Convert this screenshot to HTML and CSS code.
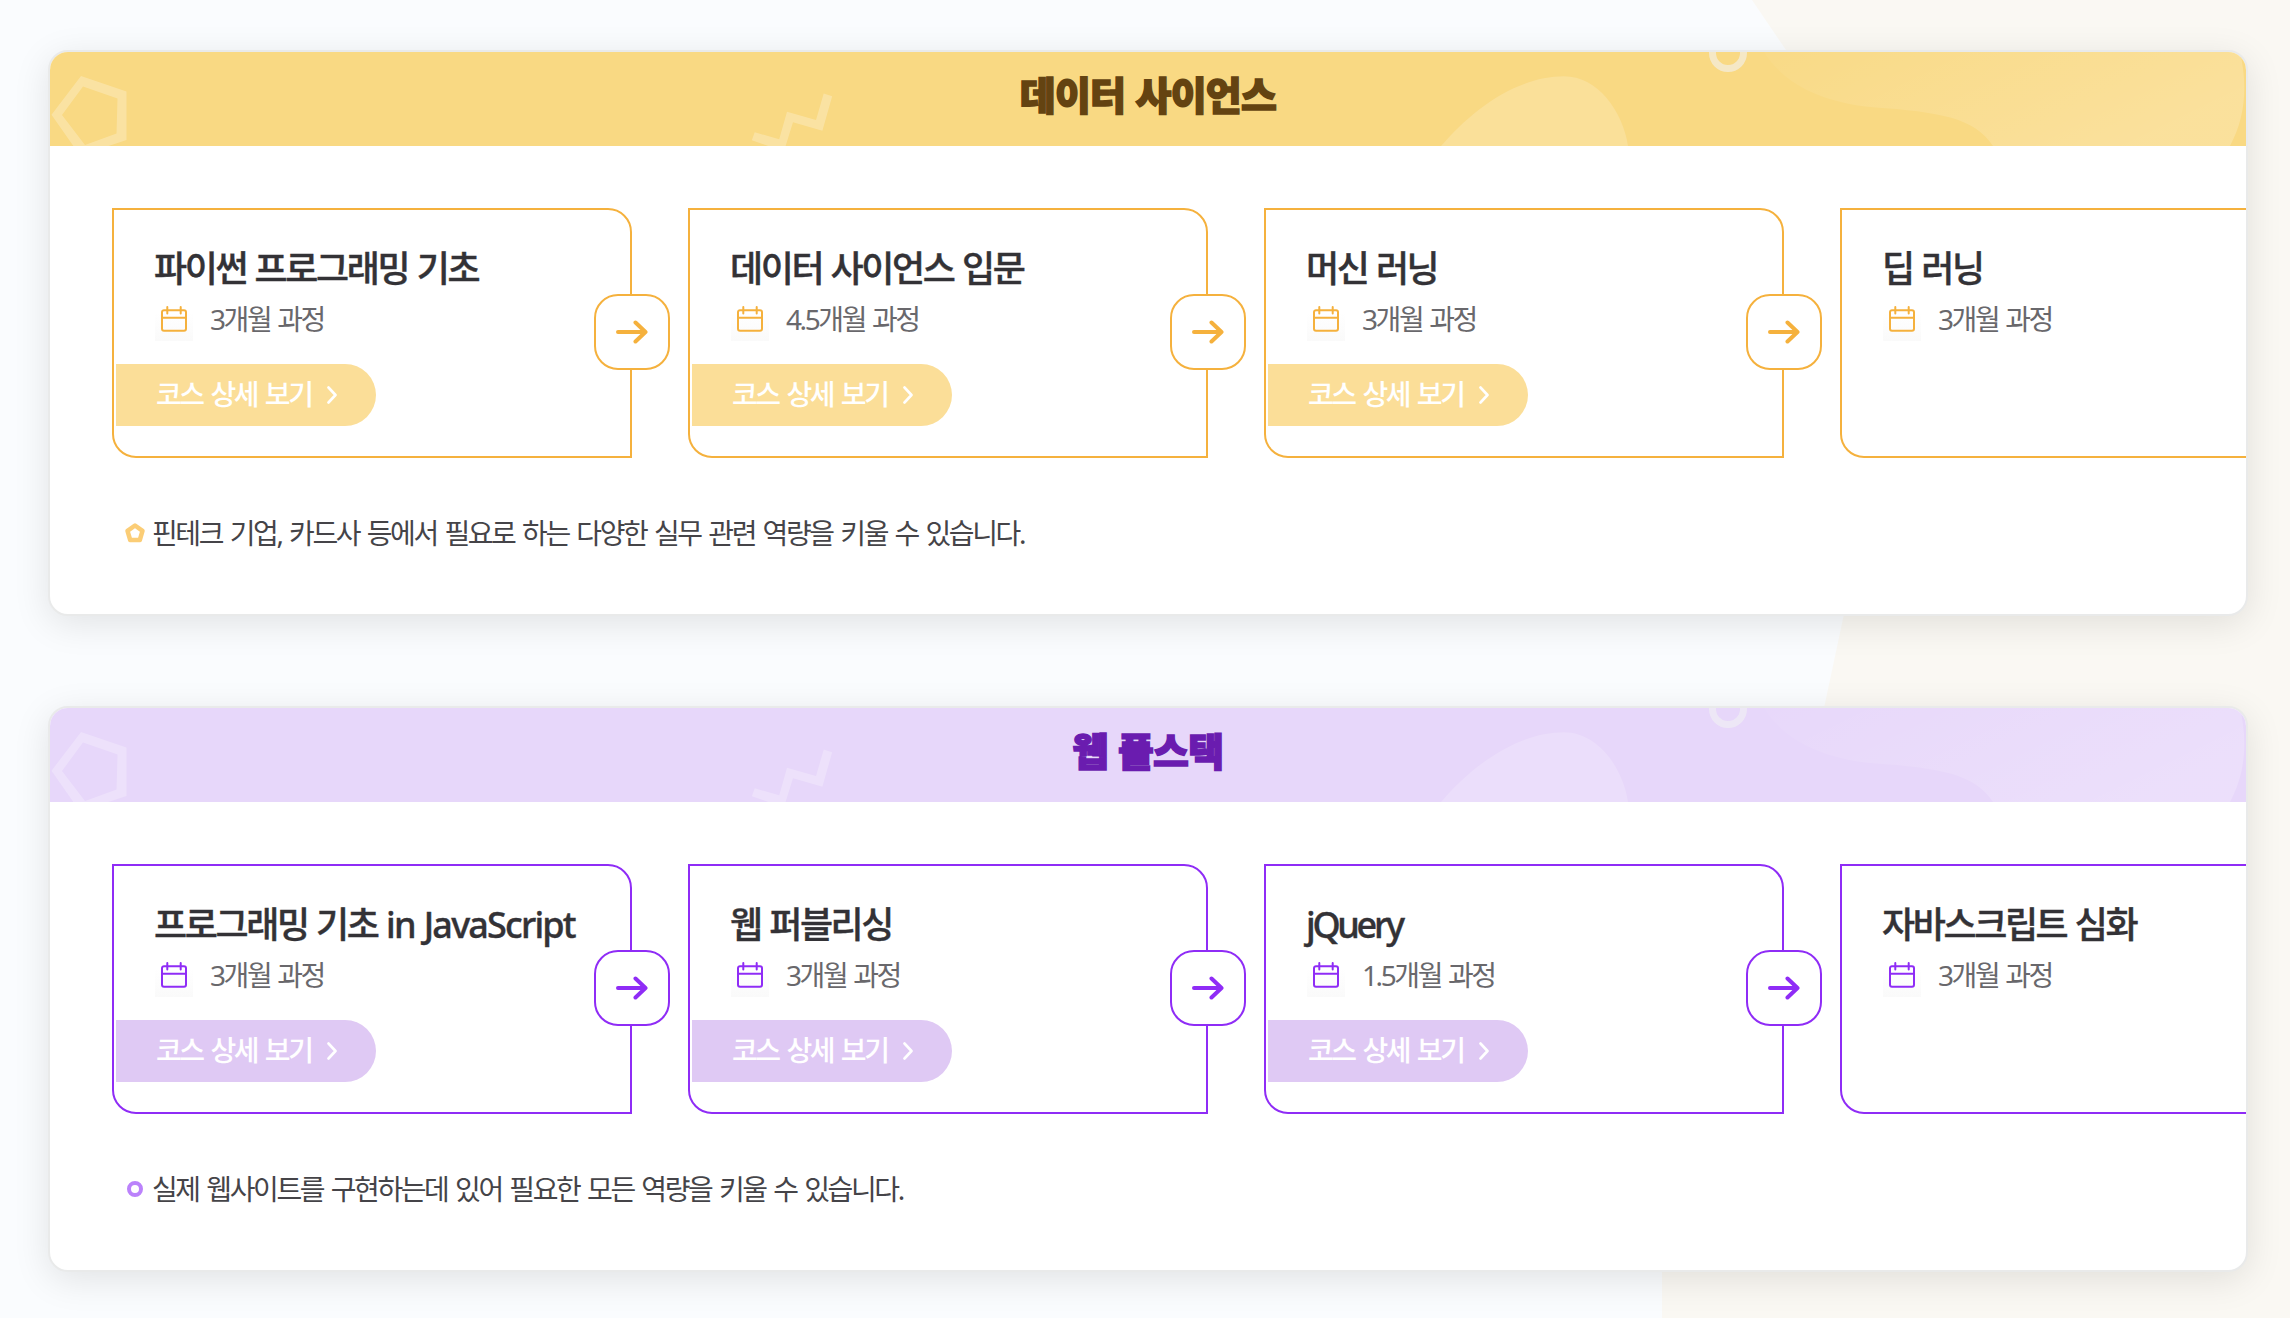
FILE: index.html
```html
<!DOCTYPE html>
<html lang="ko">
<head>
    <meta charset="UTF-8">
    <meta name="viewport" content="width=device-width, initial-scale=1.0">
    <title>학습 로드맵</title>
    <link rel="stylesheet" href="styles.css">
</head>
<body>
    <svg class="sprite" width="0" height="0">
        <defs>
            <linearGradient id="wave" x1="0" y1="0" x2="1" y2="0.4">
                <stop offset="0" stop-color="#fff" stop-opacity="0.03" />
                <stop offset="1" stop-color="#fff" stop-opacity="0.2" />
            </linearGradient>
        </defs>
        <symbol id="header-shapes" viewBox="0 0 2196 94">
            <path d="M31 24L76.500 39.500V88L30 103.500L1.500 62.700ZM33 34.500L12 63L35 93L66.500 81.500L67.500 46.500Z" fill="#fff" fill-opacity="0.25" fill-rule="evenodd" />
            <path d="M773.700 41.500L782.200 44.200L772.400 78.700L743 70.300L735 96H724L701.800 88.300L704.700 80.200L729.200 87.300L737 59.700L766 68Z" fill="#fff" fill-opacity="0.25" />
            <path d="M1391 94C1420 60 1465 24.300 1514 24.300C1548 24.300 1573 60 1578 94Z" fill="#fff" fill-opacity="0.18" />
            <circle cx="1678" cy="1" r="15.500" fill="none" stroke="#f2f2f3" stroke-opacity="0.6" stroke-width="7" />
            <path d="M1714 0C1735 33 1772 50 1823 55.300C1890 60 1925 66 1943 94H2180C2195 66 2198 35 2190 0Z" fill="url(#wave)" />
        </symbol>
        <symbol id="calendar" viewBox="0 0 26 26">
            <path d="M3 4.200H23A2 2 0 0 1 25 6.200V22.800A2 2 0 0 1 23 24.800H3A2 2 0 0 1 1 22.800V6.200A2 2 0 0 1 3 4.200ZM1 11.700H25M6.300 1V7.500M19.700 1V7.500" fill="none" stroke="currentColor" stroke-width="2" stroke-linecap="round" />
        </symbol>
        <symbol id="arrow" viewBox="0 0 32 24">
            <path d="M2 12H29M19.500 2.500L29.500 12L19.500 21.500" fill="none" stroke="currentColor" stroke-width="4" stroke-linecap="round" stroke-linejoin="round" />
        </symbol>
        <symbol id="chevron" viewBox="0 0 10 18">
            <path d="M1.500 1.500L8.500 9L1.500 16.500" fill="none" stroke="currentColor" stroke-width="2.600" stroke-linecap="round" stroke-linejoin="round" />
        </symbol>
    </svg>

    <svg class="backdrop" viewBox="0 0 2290 1318">
        <path d="M1752 0L1786 50C1870 230 1888 390 1844 614L1824 708C1790 850 1662 980 1662 1240V1318H2290V0Z" fill="#faf8f3" />
    </svg>

    <main class="roadmaps">
        <section class="roadmap data">
            <header class="roadmap-header">
                <svg class="shapes"><use href="#header-shapes" /></svg>
                <h2>데이터 사이언스</h2>
            </header>
            <div class="courses">
                <article class="course">
                    <h3>파이썬 프로그래밍 기초</h3>
                    <p class="period"><svg><use href="#calendar" /></svg>3개월 과정</p>
                    <a class="detail">코스 상세 보기<svg><use href="#chevron" /></svg></a>
                    <span class="next"><svg><use href="#arrow" /></svg></span>
                </article>
                <article class="course">
                    <h3>데이터 사이언스 입문</h3>
                    <p class="period"><svg><use href="#calendar" /></svg>4.5개월 과정</p>
                    <a class="detail">코스 상세 보기<svg><use href="#chevron" /></svg></a>
                    <span class="next"><svg><use href="#arrow" /></svg></span>
                </article>
                <article class="course">
                    <h3>머신 러닝</h3>
                    <p class="period"><svg><use href="#calendar" /></svg>3개월 과정</p>
                    <a class="detail">코스 상세 보기<svg><use href="#chevron" /></svg></a>
                    <span class="next"><svg><use href="#arrow" /></svg></span>
                </article>
                <article class="course">
                    <h3>딥 러닝</h3>
                    <p class="period"><svg><use href="#calendar" /></svg>3개월 과정</p>
                </article>
            </div>
            <p class="note">
                <svg viewBox="0 0 22 22"><path d="M11 3.500L18.500 8.800L15.800 18H6.200L3.500 8.800Z" fill="none" stroke="currentColor" stroke-width="4.500" stroke-linejoin="round" /></svg>
                <span>핀테크 기업, 카드사 등에서 필요로 하는 다양한 실무 관련 역량을 키울 수 있습니다.</span>
            </p>
        </section>

        <section class="roadmap web">
            <header class="roadmap-header">
                <svg class="shapes"><use href="#header-shapes" /></svg>
                <h2>웹 풀스택</h2>
            </header>
            <div class="courses">
                <article class="course">
                    <h3>프로그래밍 기초 <span class="wide">in JavaScript</span></h3>
                    <p class="period"><svg><use href="#calendar" /></svg>3개월 과정</p>
                    <a class="detail">코스 상세 보기<svg><use href="#chevron" /></svg></a>
                    <span class="next"><svg><use href="#arrow" /></svg></span>
                </article>
                <article class="course">
                    <h3>웹 퍼블리싱</h3>
                    <p class="period"><svg><use href="#calendar" /></svg>3개월 과정</p>
                    <a class="detail">코스 상세 보기<svg><use href="#chevron" /></svg></a>
                    <span class="next"><svg><use href="#arrow" /></svg></span>
                </article>
                <article class="course">
                    <h3><span class="tight">jQuery</span></h3>
                    <p class="period"><svg><use href="#calendar" /></svg>1.5개월 과정</p>
                    <a class="detail">코스 상세 보기<svg><use href="#chevron" /></svg></a>
                    <span class="next"><svg><use href="#arrow" /></svg></span>
                </article>
                <article class="course">
                    <h3>자바스크립트 심화</h3>
                    <p class="period"><svg><use href="#calendar" /></svg>3개월 과정</p>
                </article>
            </div>
            <p class="note">
                <svg viewBox="0 0 22 22"><circle cx="11" cy="11" r="6" fill="none" stroke="currentColor" stroke-width="4" /></svg>
                <span>실제 웹사이트를 구현하는데 있어 필요한 모든 역량을 키울 수 있습니다.</span>
            </p>
        </section>
    </main>
</body>
</html>
```

FILE: styles.css
```css
* {
    box-sizing: border-box;
    margin: 0;
    padding: 0;
}
body {
    position: relative;
    height: 1318px;
    overflow: hidden;
    background: #fafcfe;
    color: #333236;
    font-family: "Noto Sans", "Noto Sans CJK KR", sans-serif;
}
.sprite {
    position: absolute;
}
.backdrop {
    position: absolute;
    top: 0;
    left: 0;
    width: 2290px;
    height: 1318px;
}
.roadmaps {
    position: relative;
    display: flex;
    flex-direction: column;
    gap: 90px;
    width: 2248px;
    padding: 50px 0 0 48px;
}
.roadmap {
    height: 566px;
    overflow: hidden;
    background: #fff;
    border: 2px solid #e9eaea;
    border-radius: 20px;
    box-shadow: 0 8px 36px rgba(0, 0, 0, 0.1);
}
.data {
    --accent: #f5b13d;
    --header: #f9d983;
    --title: #644311;
    --button: #fbde98;
    --bullet: #fbcd76;
}
.web {
    --accent: #8f2cf6;
    --header: #e7d7fa;
    --title: #6a1caf;
    --button: #dfc9f4;
    --bullet: #bb82fb;
}
.roadmap-header {
    position: relative;
    display: flex;
    justify-content: center;
    align-items: center;
    height: 94px;
    background: var(--header);
}
.shapes {
    position: absolute;
    top: 0;
    left: 0;
    width: 2196px;
    height: 94px;
}
.roadmap-header h2 {
    position: relative;
    padding-bottom: 13px;
    color: var(--title);
    font-family: "Noto Sans CJK KR", sans-serif;
    font-size: 39px;
    font-weight: 900;
    line-height: 56px;
    letter-spacing: -0.7px;
    -webkit-text-stroke: 1.5px var(--title);
}
.courses {
    display: flex;
    gap: 56px;
    padding: 62px 0 0 62px;
}
.course {
    position: relative;
    display: flex;
    flex-direction: column;
    align-items: flex-start;
    flex: 0 0 520px;
    height: 250px;
    padding: 32px 2px 0;
    border: 2px solid var(--accent);
    border-radius: 0 24px 0 24px;
}
.course h3 {
    padding-left: 38px;
    font-size: 36px;
    font-weight: 500;
    line-height: 54px;
    letter-spacing: -2.4px;
    word-spacing: 1.5px;
    white-space: nowrap;
    -webkit-text-stroke: 0.4px #333236;
}
.course .wide {
    letter-spacing: -1.8px;
}
.course .tight {
    letter-spacing: -3.3px;
}
.period {
    display: flex;
    align-items: center;
    gap: 17px;
    padding-left: 39px;
    margin-top: 1px;
    color: #69686c;
    font-size: 28px;
    line-height: 44px;
    letter-spacing: -2.4px;
    word-spacing: 2px;
}
.period svg {
    width: 38px;
    height: 36px;
    margin-top: 8px;
    padding: 1px 6px 9px;
    background: linear-gradient(#fff 20%, #fafafa);
    color: var(--accent);
}
.detail {
    display: flex;
    align-items: center;
    gap: 15px;
    width: 260px;
    height: 62px;
    margin-top: 23px;
    padding: 0 0 5px 40px;
    border-radius: 0 31px 31px 0;
    background: var(--button);
    color: #fff;
    font-size: 28px;
    font-weight: 500;
    letter-spacing: -2.4px;
    word-spacing: 2.8px;
}
.detail svg {
    width: 10px;
    height: 18px;
    margin-top: 4px;
}
.next {
    position: absolute;
    top: 84px;
    right: -40px;
    display: flex;
    justify-content: center;
    align-items: center;
    width: 76px;
    height: 76px;
    border: 2px solid var(--accent);
    border-radius: 24px;
    background: #fff;
    color: var(--accent);
}
.next svg {
    width: 32px;
    height: 24px;
}
.note {
    display: flex;
    align-items: center;
    gap: 6px;
    padding: 54px 0 0 74px;
    font-size: 28px;
    line-height: 42px;
    letter-spacing: -2.4px;
    word-spacing: 2.7px;
}
.note svg {
    width: 22px;
    height: 22px;
    color: var(--bullet);
}
.note span {
    color: #454448;
}
```
